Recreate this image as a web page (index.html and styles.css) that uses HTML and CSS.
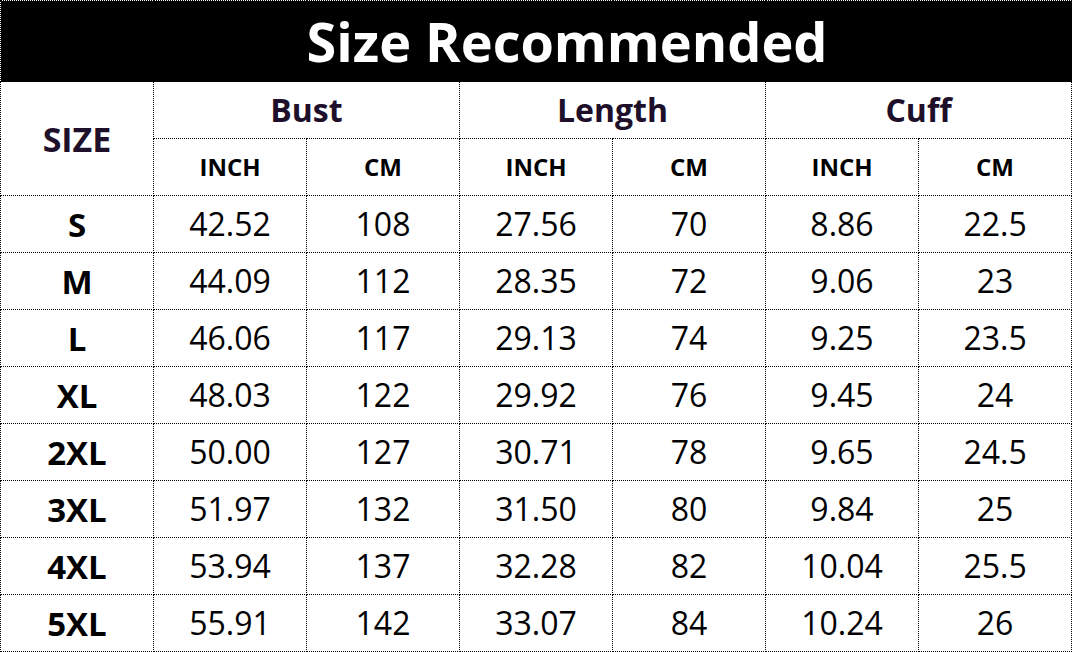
FILE: index.html
```html
<!DOCTYPE html>
<html>
<head>
<meta charset="utf-8">
<link rel="stylesheet" href="styles.css">
</head>
<body>
<table class="chart">
  <colgroup>
    <col class="c"><col class="c"><col class="c"><col class="c"><col class="c"><col class="c"><col class="c">
  </colgroup>
  <tr class="title-row"><td class="title" colspan="7">Size Recommended</td></tr>
  <tr class="head-row">
    <td class="size-head" rowspan="2">SIZE</td>
    <td class="group" colspan="2">Bust</td>
    <td class="group" colspan="2">Length</td>
    <td class="group" colspan="2">Cuff</td>
  </tr>
  <tr class="head-row">
    <td class="unit">INCH</td><td class="unit">CM</td>
    <td class="unit">INCH</td><td class="unit">CM</td>
    <td class="unit">INCH</td><td class="unit">CM</td>
  </tr>
  <tr><td class="sz">S</td><td>42.52</td><td>108</td><td>27.56</td><td>70</td><td>8.86</td><td>22.5</td></tr>
  <tr><td class="sz">M</td><td>44.09</td><td>112</td><td>28.35</td><td>72</td><td>9.06</td><td>23</td></tr>
  <tr><td class="sz">L</td><td>46.06</td><td>117</td><td>29.13</td><td>74</td><td>9.25</td><td>23.5</td></tr>
  <tr><td class="sz">XL</td><td>48.03</td><td>122</td><td>29.92</td><td>76</td><td>9.45</td><td>24</td></tr>
  <tr><td class="sz">2XL</td><td>50.00</td><td>127</td><td>30.71</td><td>78</td><td>9.65</td><td>24.5</td></tr>
  <tr><td class="sz">3XL</td><td>51.97</td><td>132</td><td>31.50</td><td>80</td><td>9.84</td><td>25</td></tr>
  <tr><td class="sz">4XL</td><td>53.94</td><td>137</td><td>32.28</td><td>82</td><td>10.04</td><td>25.5</td></tr>
  <tr><td class="sz">5XL</td><td>55.91</td><td>142</td><td>33.07</td><td>84</td><td>10.24</td><td>26</td></tr>
</table>
</body>
</html>
```
FILE: styles.css
```css
html, body {
  margin: 0;
  padding: 0;
  background: #fff;
}
.chart {
  border-collapse: collapse;
  table-layout: fixed;
  width: 1072px;
  font-family: "Open Sans", "Noto Sans", sans-serif;
  color: #000;
}
.chart col.c {
  width: 153px;
}
.chart td {
  border: 1px dotted #000;
  padding: 0;
  height: 56px;
  text-align: center;
  vertical-align: middle;
  font-size: 32px;
  line-height: 1;
  white-space: nowrap;
}
.chart .title-row td {
  height: 80px;
}
.chart td.title {
  background: #000;
  background-clip: padding-box;
  color: #fff;
  font-weight: 700;
  font-size: 54px;
  padding-left: 62px;
}
.chart td.size-head {
  font-weight: 700;
  font-size: 34px;
  color: #1e0f2a;
}
.chart td.group {
  font-weight: 700;
  font-size: 32px;
  color: #1e0f2a;
}
.chart td.unit {
  font-weight: 700;
  font-size: 24px;
  color: #000;
}
.chart td.sz {
  font-weight: 700;
  font-size: 33px;
}
```
